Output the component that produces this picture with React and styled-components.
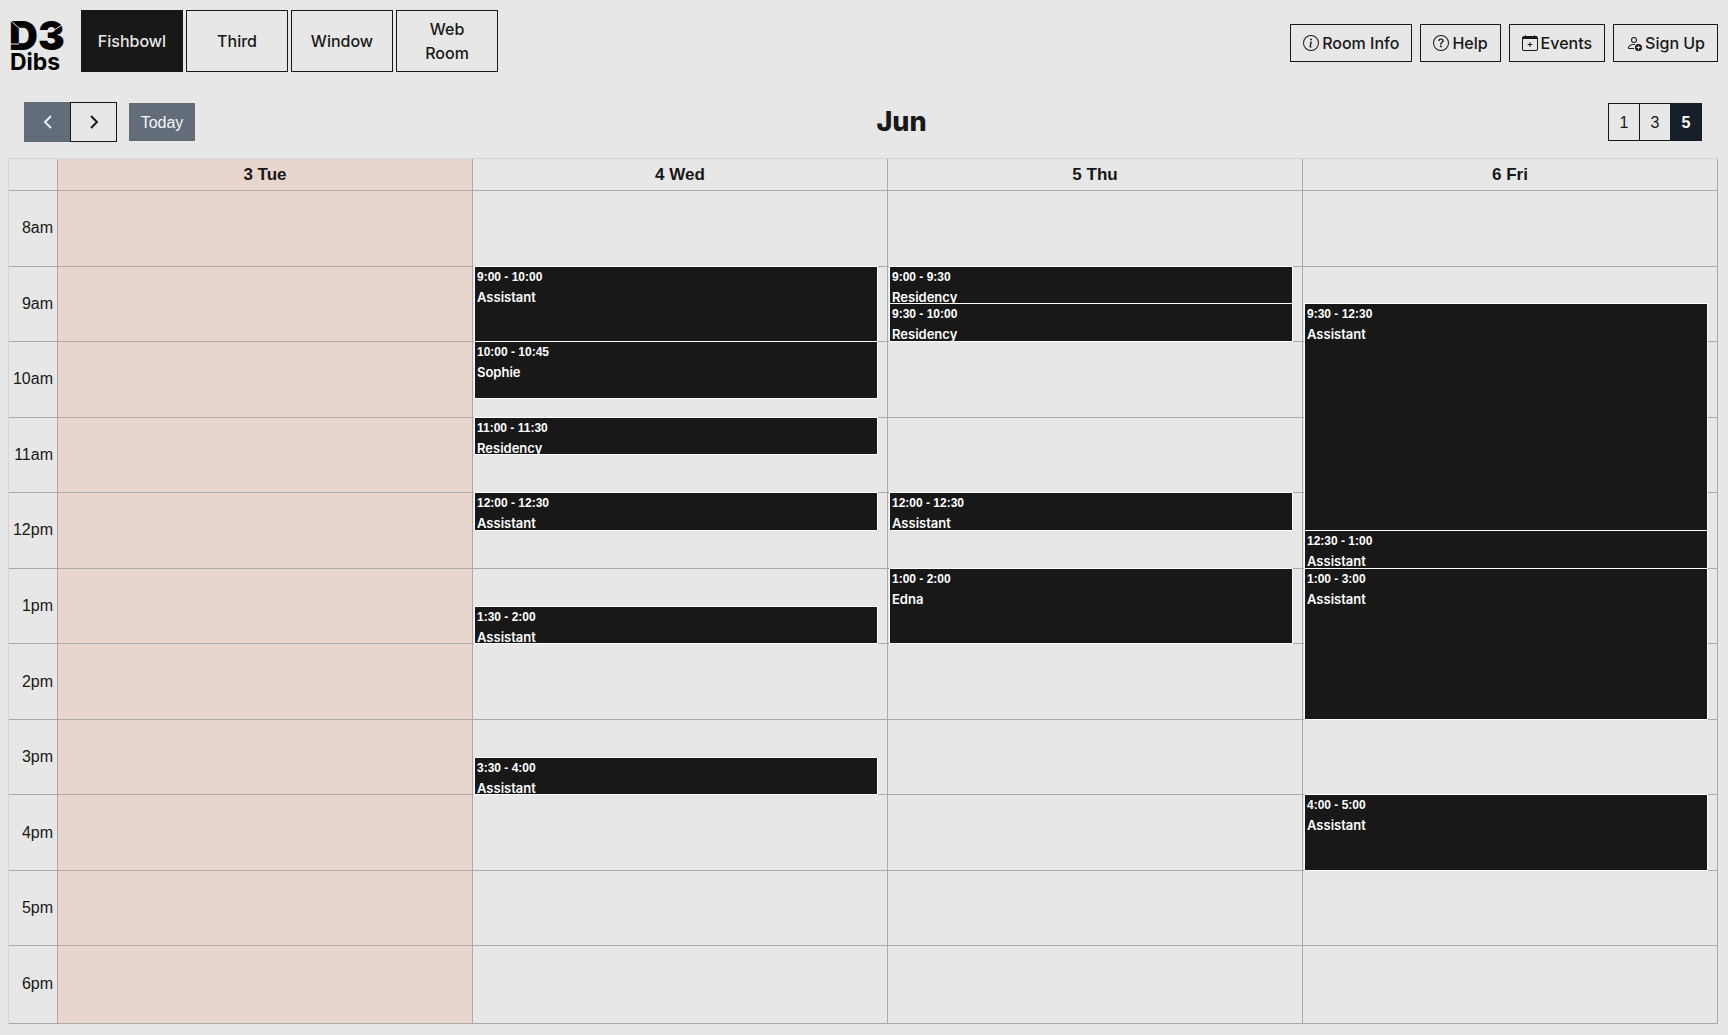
import React, { useState } from "react";
import styled, { createGlobalStyle, css } from "styled-components";
import { BsInfoCircle, BsQuestionCircle, BsCalendarPlus, BsPersonAdd } from "react-icons/bs";

const ink = "#181818";
const paper = "#e7e7e7";
const line = "#aaaaaa";
const faintLine = "#d4d4d4";
const slate = "#626d79";
const navy = "#17202a";
const today = "#e8d5cd";
const uiFont = `Inter, "Liberation Sans", sans-serif`;
const gridFont = `"Liberation Sans", Arial, sans-serif`;

const GlobalStyle = createGlobalStyle`
  *, *::before, *::after { box-sizing: border-box; }
  body { margin: 0; background: ${paper}; color: ${ink}; font-family: ${gridFont}; font-size: 16px; }
  button { cursor: pointer; }
`;

const Page = styled.div`
  display: flex;
  flex-direction: column;
  min-height: 100vh;
  padding-bottom: 11px;
`;

const TopBar = styled.header`
  display: flex;
  align-items: center;
  justify-content: space-between;
  padding: 10px 10px 0 9px;
`;

const Group = styled.div`
  display: flex;
  align-items: center;
  gap: ${(p) => p.$gap}px;
`;

const Actions = styled(Group)`
  padding-top: 4px;
`;

const RoomList = styled.nav`
  display: flex;
  gap: 3px;
`;

const HomeLink = styled.a`
  display: block;
  width: 56px;
  height: 62px;
  color: #000;
  text-decoration: none;
`;

const Mark = styled.svg`
  display: block;
  overflow: visible;
`;

const LogoText = styled.text`
  font-family: ${uiFont};
  font-weight: ${(p) => p.$weight};
  font-size: ${(p) => p.$size}px;
  fill: currentColor;
`;

const outlined = css`
  border: 1px solid ${ink};
  border-radius: 0;
  background: transparent;
  color: ${ink};
`;

const RoomButton = styled.button`
  ${outlined}
  width: 102px;
  min-height: 62px;
  padding: 6px 14px;
  font: 500 16px/24px ${uiFont};
  ${(p) => p.$active && css`background: ${ink}; color: ${paper};`}
`;

const ActionButton = styled.button`
  ${outlined}
  display: flex;
  align-items: center;
  gap: 3px;
  height: 38px;
  padding: 0 12px;
  font: 500 16px/24px ${uiFont};
`;

const Toolbar = styled.div`
  display: flex;
  align-items: center;
  justify-content: space-between;
  padding: 30px 26px 16px 24px;
`;

const Arrows = styled.div`
  display: flex;
`;

const ArrowButton = styled.button`
  ${outlined}
  display: grid;
  place-items: center;
  width: 47px;
  height: 40px;
  padding: 0;
  & + & { margin-left: -1px; }
  ${(p) => p.$muted && css`background: ${slate}; border-color: ${slate}; color: #e6f2fb;`}
`;

const TodayButton = styled.button`
  width: 66px;
  height: 38px;
  padding: 2px 0 0;
  border: 0;
  background: ${slate};
  color: #f2f8fc;
  font: 16px/24px ${gridFont};
`;

const Title = styled.h1`
  margin: 0;
  font: 800 27px/40px ${uiFont};
`;

const SpanButton = styled.button`
  ${outlined}
  width: 32px;
  height: 38px;
  padding: 2px 0 0;
  font: 16px/24px ${gridFont};
  & + & { margin-left: -1px; }
  ${(p) => p.$active && css`background: ${navy}; border-color: ${navy}; color: #fff; font-weight: 700;`}
`;

const Calendar = styled.main`
  flex: 1;
  display: flex;
  flex-direction: column;
  margin: 0 10px 0 8px;
  border-top: 1px solid ${faintLine};
  border-left: 1px solid ${faintLine};
`;

const columns = css`
  display: grid;
  grid-template-columns: 49px repeat(4, minmax(0, 1fr));
`;

const DayHeads = styled.div`
  ${columns}
`;

const DayHead = styled.h2`
  margin: 0;
  height: 32px;
  border-right: 1px solid ${line};
  border-bottom: 1px solid ${line};
  background: ${(p) => (p.$today ? today : "transparent")};
  text-align: center;
  font: 700 17px/32px ${gridFont};
`;

const Hours = styled.div`
  ${columns}
  flex: 1;
  min-height: 660px;
`;

const Column = styled.section`
  contain: size;
  display: grid;
  grid-template-rows: repeat(44, minmax(0, 1fr));
  grid-template-columns: minmax(0, 1fr);
  padding-bottom: 1px;
  border-right: 1px solid ${line};
  border-bottom: 1px solid ${line};
  background: ${(p) => (p.$today ? today : "transparent")};
`;

const Slot = styled.div`
  grid-column: 1;
  grid-row: ${(p) => p.$row} / span 4;
  display: flex;
  align-items: center;
  justify-content: flex-end;
  padding-right: 4px;
  border-bottom: ${(p) => (p.$last ? "0" : `1px solid ${line}`)};
`;

const Event = styled.button`
  grid-column: 1;
  grid-row: ${(p) => p.$from} / ${(p) => p.$to};
  display: flex;
  flex-direction: column;
  align-items: flex-start;
  justify-content: flex-start;
  margin: -1px 9px 0 1px;
  padding: 2px 2px 0;
  overflow: hidden;
  border: 1px solid #fff;
  border-radius: 0;
  background: ${ink};
  color: #fff;
  text-align: left;
`;

const EventTime = styled.span`
  flex: none;
  font: 700 12px/16px ${gridFont};
`;

const EventName = styled.span`
  flex: none;
  font: 600 13px/24px ${uiFont};
`;

const rooms = ["Fishbowl", "Third", "Window", "Web Room"];
const hours = ["8am", "9am", "10am", "11am", "12pm", "1pm", "2pm", "3pm", "4pm", "5pm", "6pm"];

const days = [
  { label: "3 Tue", today: true, events: [] },
  {
    label: "4 Wed",
    events: [
      [9, 10, "9:00 - 10:00", "Assistant"],
      [10, 10.75, "10:00 - 10:45", "Sophie"],
      [11, 11.5, "11:00 - 11:30", "Residency"],
      [12, 12.5, "12:00 - 12:30", "Assistant"],
      [13.5, 14, "1:30 - 2:00", "Assistant"],
      [15.5, 16, "3:30 - 4:00", "Assistant"],
    ],
  },
  {
    label: "5 Thu",
    events: [
      [9, 9.5, "9:00 - 9:30", "Residency"],
      [9.5, 10, "9:30 - 10:00", "Residency"],
      [12, 12.5, "12:00 - 12:30", "Assistant"],
      [13, 14, "1:00 - 2:00", "Edna"],
    ],
  },
  {
    label: "6 Fri",
    events: [
      [9.5, 12.5, "9:30 - 12:30", "Assistant"],
      [12.5, 13, "12:30 - 1:00", "Assistant"],
      [13, 15, "1:00 - 3:00", "Assistant"],
      [16, 17, "4:00 - 5:00", "Assistant"],
    ],
  },
];

const rowOf = (time) => (time - 8) * 4 + 1;

function Logo() {
  return (
    <Mark width="56" height="62" viewBox="0 0 56 62" aria-hidden="true">
      <LogoText x="0" y="40" $size={40} $weight={900}>D3</LogoText>
      <LogoText x="1" y="60" $size={23} $weight={700}>Dibs</LogoText>
      <g fill="none" stroke={paper} strokeWidth="1">
        <path d="M2 11l8 7M1 34h9" />
        <path d="M42 22l11-7" />
      </g>
    </Mark>
  );
}

function Chevron({ direction }) {
  return (
    <svg width="10" height="16" viewBox="0 0 10 16" fill="none" stroke="currentColor" strokeWidth="2" aria-hidden="true">
      <path d={direction === "left" ? "M8 2L2 8l6 6" : "M2 2l6 6-6 6"} />
    </svg>
  );
}

export default function App() {
  const [room, setRoom] = useState("Fishbowl");
  const [span, setSpan] = useState(5);

  return (
    <Page>
      <GlobalStyle />
      <TopBar>
        <Group $gap={16}>
          <HomeLink href="#" aria-label="D3 Dibs"><Logo /></HomeLink>
          <RoomList>
            {rooms.map((name) => (
              <RoomButton key={name} $active={name === room} onClick={() => setRoom(name)}>{name}</RoomButton>
            ))}
          </RoomList>
        </Group>
        <Actions $gap={8}>
          <ActionButton><BsInfoCircle />Room Info</ActionButton>
          <ActionButton><BsQuestionCircle />Help</ActionButton>
          <ActionButton><BsCalendarPlus />Events</ActionButton>
          <ActionButton><BsPersonAdd />Sign Up</ActionButton>
        </Actions>
      </TopBar>

      <Toolbar>
        <Group $gap={12}>
          <Arrows>
            <ArrowButton $muted aria-label="Previous"><Chevron direction="left" /></ArrowButton>
            <ArrowButton aria-label="Next"><Chevron direction="right" /></ArrowButton>
          </Arrows>
          <TodayButton>Today</TodayButton>
        </Group>
        <Title>Jun</Title>
        <Group $gap={0}>
          {[1, 3, 5].map((n) => (
            <SpanButton key={n} $active={n === span} onClick={() => setSpan(n)}>{n}</SpanButton>
          ))}
        </Group>
      </Toolbar>

      <Calendar>
        <DayHeads>
          <DayHead as="div" />
          {days.map((day) => (
            <DayHead key={day.label} $today={day.today}>{day.label}</DayHead>
          ))}
        </DayHeads>
        <Hours>
          <Column>
            {hours.map((hour, i) => (
              <Slot key={hour} $row={i * 4 + 1} $last={i === hours.length - 1}>{hour}</Slot>
            ))}
          </Column>
          {days.map((day) => (
            <Column key={day.label} $today={day.today}>
              {hours.map((hour, i) => (
                <Slot key={hour} $row={i * 4 + 1} $last={i === hours.length - 1} />
              ))}
              {day.events.map(([from, to, time, name]) => (
                <Event key={time} $from={rowOf(from)} $to={rowOf(to)}>
                  <EventTime>{time}</EventTime>
                  <EventName>{name}</EventName>
                </Event>
              ))}
            </Column>
          ))}
        </Hours>
      </Calendar>
    </Page>
  );
}
